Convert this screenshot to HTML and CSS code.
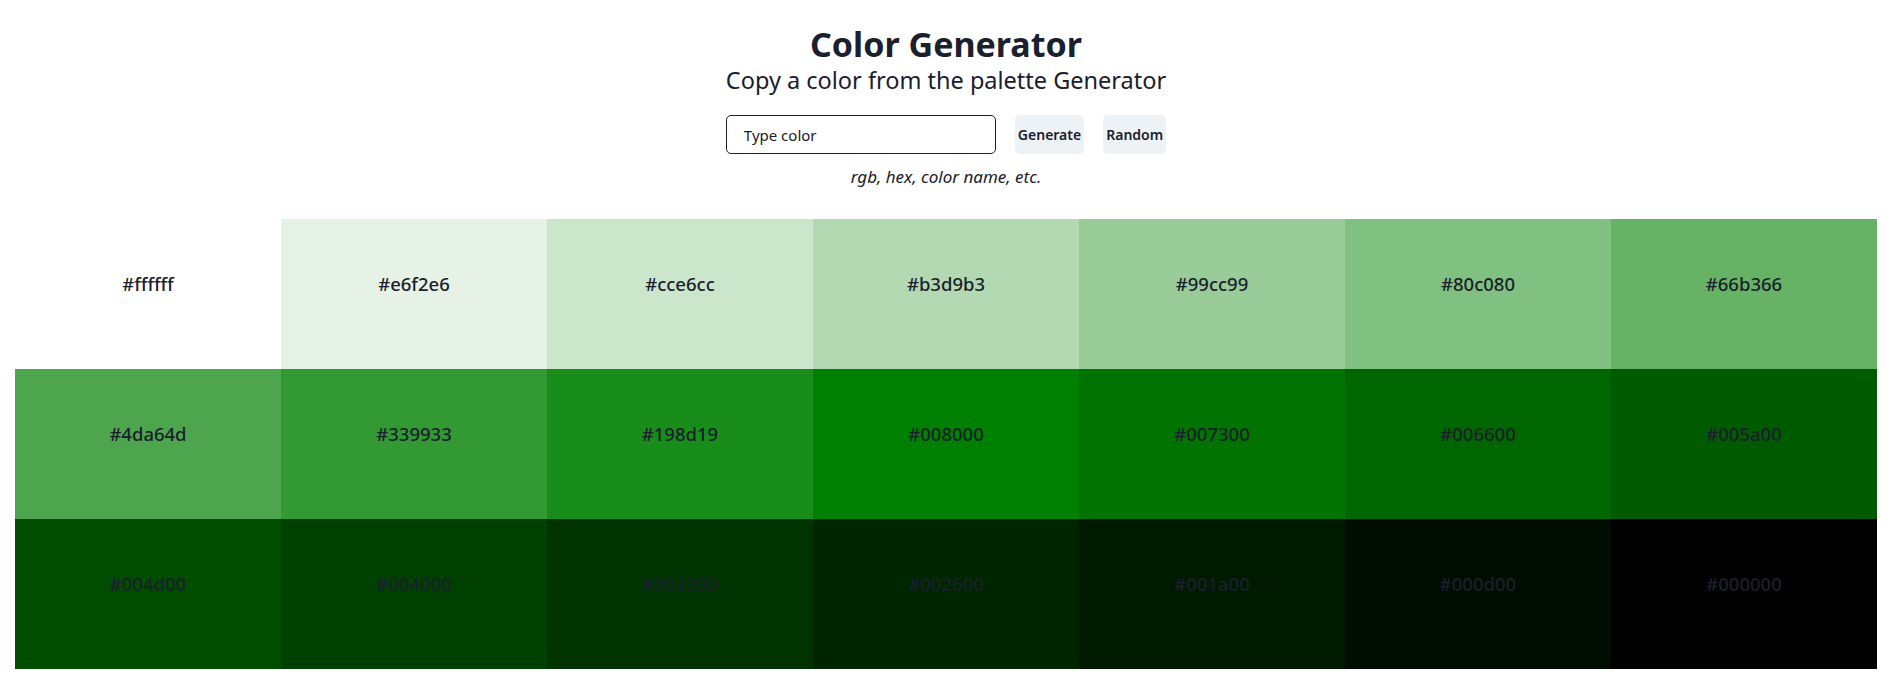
FILE: index.html
```html
<!DOCTYPE html>
<html lang="en">
<head>
<meta charset="utf-8">
<title>Color Generator</title>
<link rel="stylesheet" href="styles.css">
</head>
<body>
<header class="header">
  <h1 class="title">Color Generator</h1>
  <h2 class="subtitle">Copy a color from the palette Generator</h2>
  <form class="controls">
    <input class="color-input" type="text" placeholder="Type color">
    <button class="btn" type="button">Generate</button>
    <button class="btn" type="button">Random</button>
  </form>
  <p class="hint">rgb, hex, color name, etc.</p>
</header>
<main class="palette">
  <div class="swatch" style="background:#ffffff">#ffffff</div>
  <div class="swatch" style="background:#e6f2e6">#e6f2e6</div>
  <div class="swatch" style="background:#cce6cc">#cce6cc</div>
  <div class="swatch" style="background:#b3d9b3">#b3d9b3</div>
  <div class="swatch" style="background:#99cc99">#99cc99</div>
  <div class="swatch" style="background:#80c080">#80c080</div>
  <div class="swatch" style="background:#66b366">#66b366</div>
  <div class="swatch" style="background:#4da64d">#4da64d</div>
  <div class="swatch" style="background:#339933">#339933</div>
  <div class="swatch" style="background:#198d19">#198d19</div>
  <div class="swatch" style="background:#008000">#008000</div>
  <div class="swatch" style="background:#007300">#007300</div>
  <div class="swatch" style="background:#006600">#006600</div>
  <div class="swatch" style="background:#005a00">#005a00</div>
  <div class="swatch" style="background:#004d00">#004d00</div>
  <div class="swatch" style="background:#004000">#004000</div>
  <div class="swatch" style="background:#003300">#003300</div>
  <div class="swatch" style="background:#002600">#002600</div>
  <div class="swatch" style="background:#001a00">#001a00</div>
  <div class="swatch" style="background:#000d00">#000d00</div>
  <div class="swatch" style="background:#000000">#000000</div>
</main>
</body>
</html>
```

FILE: styles.css
```css
* { box-sizing: border-box; }
html, body { margin: 0; padding: 0; background: #ffffff; }
body {
  font-family: "Noto Sans", "Open Sans", sans-serif;
  color: #1a202c;
  padding: 24px 16px 20px 15px;
}
.header {
  display: flex;
  flex-direction: column;
  align-items: center;
}
.title {
  margin: 0;
  font-size: 34px;
  line-height: 40px;
  font-weight: 700;
}
.subtitle {
  margin: 0;
  font-size: 23.5px;
  line-height: 32px;
  font-weight: 400;
}
.controls {
  display: flex;
  gap: 19px;
  margin: 19px 0 0 0;
}
.color-input {
  width: 270px;
  height: 39px;
  border: 1px solid #1a202c;
  border-radius: 5px;
  padding: 0 0 0 17px;
  font-family: inherit;
  font-size: 15px;
  color: #1a202c;
  outline: none;
}
.color-input::placeholder { color: #1a202c; opacity: 1; }
.btn {
  height: 39px;
  border: none;
  border-radius: 5px;
  background: #edf2f7;
  padding: 0 3px;
  font-family: inherit;
  font-size: 14px;
  font-weight: 600;
  color: #1a202c;
}
.hint {
  margin: 11px 0 0 0;
  font-size: 17px;
  line-height: 24px;
  font-style: italic;
}
.palette {
  margin-top: 30px;
  display: grid;
  grid-template-columns: repeat(7, 1fr);
  grid-auto-rows: 150px;
}
.swatch {
  display: flex;
  align-items: center;
  justify-content: center;
  padding-bottom: 22px;
  font-size: 18.5px;
  font-weight: 500;
  color: #1a202c;
}
```
